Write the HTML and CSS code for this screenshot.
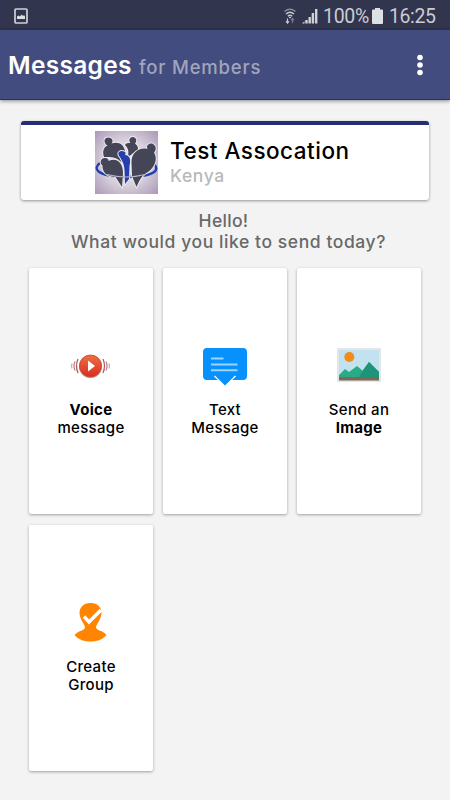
FILE: index.html
```html
<!DOCTYPE html>
<html lang="en">
<head>
<meta charset="utf-8">
<title>Messages for Members</title>
<link rel="stylesheet" href="styles.css">
</head>
<body>
<div class="status">
  <svg class="shot" width="14" height="16" viewBox="0 0 14 16"><rect x="1" y="1" width="12" height="14" rx="1" fill="none" stroke="#cfd0d7" stroke-width="1.7"/><path d="M3 11V8.500L4.500 7.500L6 8.500L7.500 6.500L9 8L10 7L11 8.500V11Z" fill="#dedfe4"/></svg>
  <svg class="wifi" width="12" height="16" viewBox="0 0 12 16" fill="none" stroke="#c9cad2" stroke-width="1.3"><path d="M.5 3.500Q6-1 11.500 3.500" stroke="#888b9b"/><path d="M2 6Q6 2.500 10 6"/><path d="M3.800 8.200Q6 6.300 8.200 8.200"/><circle cx="6" cy="9.500" r=".8" fill="#fff" stroke="none"/><path d="M3.500 10.500V15M2 13.300L3.500 15L5 13.300" stroke-width="1.200"/><path d="M8.500 15V10.500M7 12.200L8.500 10.500L10 12.200" stroke="#777a8b" stroke-width="1.200"/></svg>
  <svg class="signal" width="16" height="16" viewBox="0 0 16 16" fill="#d1d2d9"><path d="M0 15.500L2.500 13.300V15.500ZM3.300 12H5.700V15.500H3.300ZM6.500 9H8.900V15.500H6.500ZM9.700 5H12.100V15.500H9.700ZM13 1H15.400V15.500H13Z"/></svg>
  <span class="percent">100%</span>
  <svg class="battery" width="11" height="16" viewBox="0 0 11 16"><path d="M3 0H8V1.500H10Q11 1.500 11 2.500V15Q11 16 10 16H1Q0 16 0 15V2.500Q0 1.500 1 1.500H3Z" fill="#dfe0e5"/></svg>
  <span class="clock">16:25</span>
</div>
<header class="appbar">
  <h1 class="title">Messages</h1>
  <span class="subtitle">for Members</span>
  <svg class="more" width="6" height="22" viewBox="0 0 6 22" fill="#fff"><circle cx="3" cy="3.500" r="2.800"/><circle cx="3" cy="11" r="2.800"/><circle cx="3" cy="18.500" r="2.800"/></svg>
</header>
<main>
  <section class="org">
    <svg class="logo" width="63" height="63" viewBox="0 0 63 63">
      <defs><radialGradient id="glow" r=".72"><stop offset="0" stop-color="#f4f1f5"/><stop offset=".5" stop-color="#d8d1dc"/><stop offset="1" stop-color="#a895b5"/></radialGradient></defs>
      <rect width="63" height="63" fill="url(#glow)"/>
      <path d="M5 32C-2 37 0 45 30 46C60 46 65 39 59 33" fill="none" stroke="#263fae" stroke-width="2.400"/>
      <g fill="#454558" stroke="#eeeaf0" stroke-width="1.800" paint-order="stroke">
        <path d="M30 14C31 12 33 12 35.500 12C33 9 35 6 38 6C41 6 42.500 10 40 12.500C43 15 45 19 40 21C36 23 36 25 33 25C34 20 33 17 30 14Z"/>
        <path d="M9 26C7 20 9 16 12.500 14.500C8 12 9 6.500 13 6.500C17 6.500 19 10 16.500 12.500C24 10 29 14 30 20C26 19 23 22 25 27L27 32C21 25 15 26 9 26Z"/>
        <path d="M7.500 34.500C4 32 6 26.500 10 27C13 27 14 29 13.500 30C22 26 28 32 28 42L27 56L20.500 46C12 46 7 41 7.500 34.500Z"/>
        <path d="M36.500 32C36 22 44 16 52.500 18C50.500 14 55 11.500 58 13C62 15 61 20 59 21.500C63 28 60 36 53 41C47 44 45 48 41.500 56L37 45Z"/>
        <path d="M25 26C21 22 25 18 30 21C31 22 30.500 23 30 24C35 24 36 29 34.500 35L34 48L30 53L29.500 39C29 32 27 30 25 26Z" fill="#263fae"/>
      </g>
      <path d="M12 43.500Q31 48.500 50 43.500" fill="none" stroke="#b7b5c9" stroke-width="1.200"/>
    </svg>
    <div>
      <div class="org-name">Test Assocation</div>
      <div class="org-place">Kenya</div>
    </div>
  </section>
  <p class="prompt"><span class="hello">Hello!</span><br>What would you like to send today?</p>
  <section class="grid">
    <div class="tile">
      <svg width="44" height="44" viewBox="0 0 44 44"><defs><linearGradient id="red" x2="0" y2="1"><stop stop-color="#ee7044"/><stop offset="1" stop-color="#d82d20"/></linearGradient></defs><circle cx="21.500" cy="22.500" r="11.600" fill="#b9aaa7"/><circle cx="21.500" cy="22" r="11" fill="url(#red)" stroke="#c94732" stroke-width=".8"/><path d="M19 16.500V27.500L26 22Z" fill="#fff"/><g fill="none" stroke="#bd5a60" stroke-width="1.300"><path d="M9 15Q6 22 9 29M34 15Q37 22 34 29"/><path d="M6 17.500Q4 22 6 26.500M37 17.500Q39 22 37 26.500" stroke="#b7878b"/><path d="M3 19.500Q2 22 3 24.500M40 19.500Q41 22 40 24.500" stroke="#c9b0b2"/></g></svg>
      <div class="label"><b class="voice">Voice</b><br><span class="message">message</span></div>
    </div>
    <div class="tile">
      <svg width="44" height="44" viewBox="0 0 44 44"><path d="M4 4H40Q44 4 44 8V32Q44 36 40 36H32L22 42L12 36H4Q0 36 0 32V8Q0 4 4 4Z" fill="#0791fd"/><path d="M9 36L16 42H28L35 36Z" fill="#fff"/><path d="M11.500 32L22 41.500L32.500 32" fill="#0791fd" stroke="#fff" stroke-width="1.500"/><path d="M13.500 33L22 41.500L30.500 33Z" fill="#0791fd"/><path d="M8 14.500H20.500M8 20.500H34.500M8 26.200H34.500" stroke="#9dd3ff" stroke-width="2"/></svg>
      <div class="label"><span class="text">Text</span><br><span class="message-cap">Message</span></div>
    </div>
    <div class="tile">
      <svg width="44" height="44" viewBox="0 0 44 44"><path d="M0 4H44V38H0Z" fill="#e2e6e7"/><path d="M2 6H42V33H2Z" fill="#c1e2ee"/><circle cx="12.300" cy="13" r="5" fill="#f28b17"/><path d="M2 33V31L8 25L12 28L20 22L26 27L32 18L42 28V33Z" fill="#28ac87"/><path d="M22 33L26 26L32 18L42 28V33Z" fill="#1b9479"/><path d="M2 33H42V36.500H2Z" fill="#7e6756"/></svg>
      <div class="label"><span class="send">Send an</span><br><b class="image">Image</b></div>
    </div>
    <div class="tile">
      <svg class="person" width="44" height="44" viewBox="0 0 44 44"><path d="M21.500 3C29 3 33 8 32.500 13C32 20 28 23 27 27C27 31 34 30 37.500 35C33 40 27.500 41.500 21.500 41.500C15.500 41.500 10 40 5.500 35C9.500 30 16 31 16 27C15 23 11 20 10.500 13C10.500 8 14 3 21.500 3Z" fill="#ff8500"/><path d="M15 16.500L20 22L32 10" fill="none" stroke="#fff" stroke-width="3.400"/></svg>
      <div class="label"><span class="create">Create</span><br><span class="group">Group</span></div>
    </div>
  </section>
</main>
</body>
</html>
```
FILE: styles.css
```css
* { box-sizing: border-box; }
body { margin: 0; height: 800px; background: #f3f3f3; font-family: Inter, sans-serif; font-weight: 500; overflow: hidden; }
svg { display: block; flex: none; }
.status { height: 30px; background: #31354d; display: flex; align-items: center; padding: 1px 14px 0; color: #cbccd3; font: 400 19.5px/29px Roboto, sans-serif; white-space: nowrap; }
.wifi { margin-left: auto; }
.signal { margin-left: 6px; }
.percent { margin-left: 5px; width: 46px; padding-top: 2px; letter-spacing: -.3px; }
.battery { margin-left: 3px; }
.clock { margin-left: 6px; width: 47px; padding-top: 2px; letter-spacing: -.4px; }
.appbar { height: 70px; background: #434c7e; border-bottom: 1px solid #25306f; box-shadow: 0 1px 4px rgba(0,0,0,.45); display: flex; align-items: baseline; padding: 19px 27px 0 8px; color: #fff; white-space: nowrap; }
.title { margin: 0; width: 131px; font-size: 24.5px; line-height: 32px; font-weight: 600; letter-spacing: .3px; }
.subtitle { font-size: 18.5px; line-height: 32px; color: #a1a5be; letter-spacing: .8px; }
.more { margin-left: auto; align-self: flex-start; margin-top: 5px; }
.org { margin: 21px 21px 0; height: 79px; background: #fff; border-top: 4px solid #252e75; border-radius: 3px; box-shadow: 0 1px 3px rgba(0,0,0,.4); display: flex; padding: 6px 0 0 74px; white-space: nowrap; }
.org > div { margin-left: 12px; padding-top: 6px; }
.org-name { font-size: 22.5px; line-height: 28px; color: #000; letter-spacing: .5px; }
.org-place { font-size: 17.5px; line-height: 22px; color: #b9b9b9; letter-spacing: .6px; }
.prompt { margin: 10px 0 0; padding-left: 7px; text-align: center; font-size: 17.5px; line-height: 21px; color: #686868; letter-spacing: .58px; white-space: nowrap; }
.hello { margin-right: 10px; letter-spacing: .3px; }
.grid { margin: 16px 29px 0; display: grid; grid-template-columns: repeat(3, 124px); grid-auto-rows: 246px; gap: 11px 10px; }
.tile { background: #fff; border-radius: 2px; box-shadow: 0 1px 3px rgba(0,0,0,.35); display: flex; flex-direction: column; align-items: center; padding-top: 76px; }
.person { position: relative; top: -1px; }
.label { margin-top: 13px; font-size: 15px; line-height: 18px; color: #000; text-align: center; white-space: nowrap; letter-spacing: .3px; }
.label b { font-weight: 700; }
```
